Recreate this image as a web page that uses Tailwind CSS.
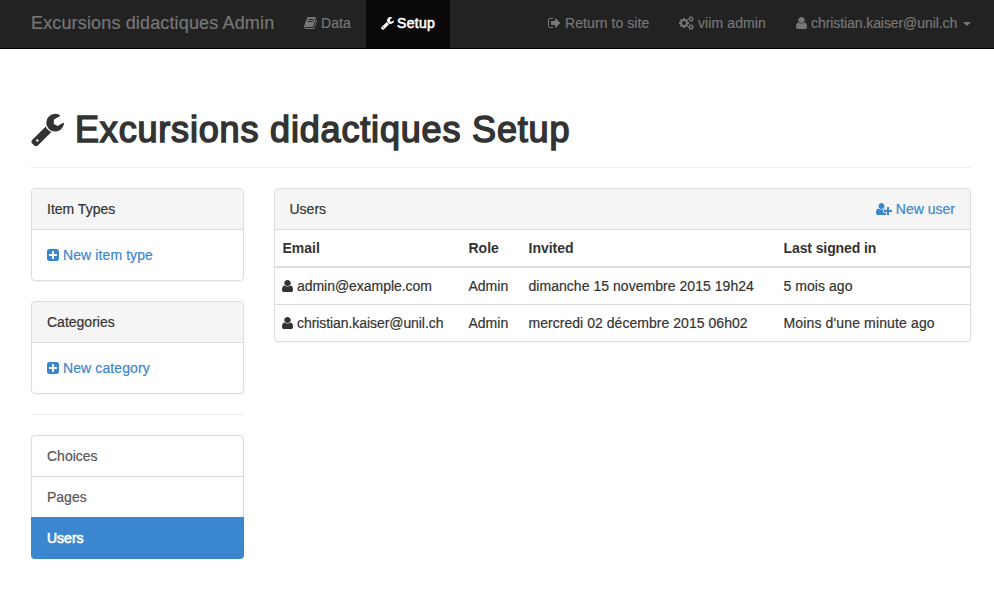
<!DOCTYPE html>
<html lang="fr">
<head>
<meta charset="utf-8">
<title>Excursions didactiques Admin</title>
<script src="https://cdn.jsdelivr.net/npm/@tailwindcss/browser@4"></script>
</head>
<body class="bg-white text-[14px] leading-[20px] text-[#333] font-['Liberation_Sans',Arial,sans-serif] whitespace-nowrap [-webkit-text-stroke:0.2px]">
<svg class="hidden">
  <symbol id="wrench" viewBox="64 0 1664 1792"><path d="M448 1472q0-26-19-45t-45-19-45 19-19 45 19 45 45 19 45-19 19-45zm644-420l-682 682q-37 37-90 37-52 0-91-37l-106-108q-38-36-38-90 0-53 38-91l681-681q39 98 114.5 173.5t173.5 114.5zm634-435q0 39-23 106-47 134-164.500 217.500t-258.500 83.500q-185 0-316.500-131.500t-131.500-316.500 131.500-316.500 316.500-131.500q58 0 121.500 16.500t107.500 46.500q16 11 16 28t-16 28l-293 169v224l193 107q5-3 79-48.500t135.500-81 70.500-35.500q15 0 23.500 10t8.500 25z"/></symbol>
  <symbol id="book" viewBox="64 0 1664 1792"><path d="M1703 478q40 57 18 129l-275 906q-19 64-76.500 107.500t-122.500 43.500h-923q-77 0-148.500-53.500t-99.500-131.500q-24-67-2-127 0-4 3-27t4-37q1-8-3-21.500t-3-19.500q2-11 8-21t16.500-23.500 16.500-23.500q23-38 45-91.500t30-91.500q3-10 .5-30t-.5-28q3-11 17-28t17-23q21-36 42-92t25-90q1-9-2.500-32t.5-28q4-13 22-30.500t22-22.500q19-26 42.500-84.500t27.500-96.500q1-8-3-25.500t-2-26.500q2-8 9-18t18-23 17-21q8-12 16.500-30.500t15-35 16-36 19.500-32 26.500-23.500 36-11.500 47.500 5.500l-1 3q38-9 51-9h761q74 0 114 56t18 130l-274 906q-36 119-71.500 153.500t-128.500 34.500h-869q-27 0-38 15-11 16-1 43 24 70 144 70h923q29 0 56-15.500t35-41.500l300-987q7-22 5-57 38 15 59 43zm-1064 2q-4 13 2 22.500t20 9.500h608q13 0 25.500-9.500t16.500-22.500l21-64q4-13-2-22.500t-20-9.500h-608q-13 0-25.500 9.500t-16.500 22.500zm-83 256q-4 13 2 22.500t20 9.500h608q13 0 25.500-9.500t16.500-22.500l21-64q4-13-2-22.500t-20-9.500h-608q-13 0-25.500 9.500t-16.500 22.500z"/></symbol>
  <symbol id="signout" viewBox="64 0 1664 1792"><path d="M704 1440q0 4 1 20t.5 26.500-3 23.500-10 19.500-20.500 6.500h-320q-119 0-203.500-84.500t-84.500-203.500v-704q0-119 84.500-203.500t203.500-84.500h320q13 0 22.500 9.500t9.500 22.500q0 4 1 20t.5 26.500-3 23.500-10 19.500-20.500 6.500h-320q-66 0-113 47t-47 113v704q0 66 47 113t113 47h312l11.500 1 11.500 3 8 5.500 7 9 2 13.500zm928-544q0 26-19 45l-544 544q-19 19-45 19t-45-19-19-45v-288h-448q-26 0-45-19t-19-45v-384q0-26 19-45t45-19h448v-288q0-26 19-45t45-19 45 19l544 544q19 19 19 45z"/></symbol>
  <symbol id="cogs" viewBox="0 0 1920 1792"><path d="M896 896q0-106-75-181t-181-75-181 75-75 181 75 181 181 75 181-75 75-181zm768 512q0-52-38-90t-90-38-90 38-38 90q0 53 37.500 90.500t90.500 37.500 90.500-37.500 37.500-90.500zm0-1024q0-52-38-90t-90-38-90 38-38 90q0 53 37.500 90.500t90.500 37.500 90.500-37.500 37.500-90.500zm-384 421v185q0 10-7 19.500t-16 10.500l-155 24q-11 35-32 76 34 48 90 115 7 11 7 20 0 12-7 19-23 30-82.500 89.500t-78.500 59.500q-11 0-21-7l-115-90q-37 19-77 31-11 108-23 155-7 24-30 24h-186q-11 0-20-7.500t-10-17.500l-23-153q-34-10-75-31l-118 89q-7 7-20 7-11 0-21-8-144-133-144-160 0-9 7-19 10-14 41-53t47-61q-23-44-35-82l-152-24q-10-1-17-9.500t-7-19.500v-185q0-10 7-19.500t16-10.500l155-24q11-35 32-76-34-48-90-115-7-11-7-20 0-12 7-20 22-30 82-89t79-59q11 0 21 7l115 90q34-18 77-32 11-108 23-154 7-24 30-24h186q11 0 20 7.500t10 17.500l23 153q34 10 75 31l118-89q8-7 20-7 11 0 21 8 144 133 144 160 0 8-7 19-12 16-42 54t-45 60q23 48 34 82l152 23q10 2 17 10.500t7 19.500zm640 533v140q0 16-149 31-12 27-30 52 51 113 51 138 0 4-4 7-122 71-124 71-8 0-46-47t-52-68q-20 2-30 2t-30-2q-14 21-52 68t-46 47q-2 0-124-71-4-3-4-7 0-25 51-138-18-25-30-52-149-15-149-31v-140q0-16 149-31 13-29 30-52-51-113-51-138 0-4 4-7 4-2 35-20t59-34 30-16q8 0 46 46.500t52 67.500q20-2 30-2t30 2q51-71 92-112l6-2q4 0 124 70 4 3 4 7 0 25-51 138 17 23 30 52 149 15 149 31zm0-1024v140q0 16-149 31-12 27-30 52 51 113 51 138 0 4-4 7-122 71-124 71-8 0-46-47t-52-68q-20 2-30 2t-30-2q-14 21-52 68t-46 47q-2 0-124-71-4-3-4-7 0-25 51-138-18-25-30-52-149-15-149-31v-140q0-16 149-31 13-29 30-52-51-113-51-138 0-4 4-7 4-2 35-20t59-34 30-16q8 0 46 46.500t52 67.500q20-2 30-2t30 2q51-71 92-112l6-2q4 0 124 70 4 3 4 7 0 25-51 138 17 23 30 52 149 15 149 31z"/></symbol>
  <symbol id="user" viewBox="256 0 1280 1792" preserveAspectRatio="none"><path d="M1536 1399q0 109-62.500 187t-150.500 78h-854q-88 0-150.500-78t-62.500-187q0-85 8.500-160.500t31.500-152 58.500-131 94-89 134.500-34.500q131 128 313 128t313-128q76 0 134.500 34.500t94 89 58.500 131 31.500 152 8.500 160.500zm-256-887q0 159-112.500 271.500t-271.500 112.500-271.500-112.500-112.500-271.500 112.500-271.500 271.500-112.500 271.500 112.500 112.500 271.500z"/></symbol>
  <symbol id="plus" viewBox="128 0 1536 1792"><path d="M1408 960v-128q0-26-19-45t-45-19h-320v-320q0-26-19-45t-45-19h-128q-26 0-45 19t-19 45v320h-320q-26 0-45 19t-19 45v128q0 26 19 45t45 19h320v320q0 26 19 45t45 19h128q26 0 45-19t19-45v-320h320q26 0 45-19t19-45zm256-544v960q0 119-84.500 203.500t-203.500 84.500h-960q-119 0-203.500-84.500t-84.500-203.500v-960q0-119 84.500-203.500t203.500-84.500h960q119 0 203.500 84.500t84.500 203.500z"/></symbol>
  <symbol id="userplus" viewBox="0 0 2048 1792"><path d="M704 896q-159 0-271.500-112.500t-112.500-271.500 112.500-271.500 271.500-112.500 271.500 112.500 112.500 271.500-112.500 271.500-271.500 112.500zm960 128h352q13 0 22.500 9.500t9.500 22.500v192q0 13-9.500 22.500t-22.500 9.500h-352v352q0 13-9.500 22.500t-22.500 9.500h-192q-13 0-22.500-9.500t-9.500-22.500v-352h-352q-13 0-22.500-9.500t-9.500-22.500v-192q0-13 9.500-22.500t22.500-9.500h352v-352q0-13 9.500-22.500t22.500-9.500h192q13 0 22.500 9.500t9.500 22.500v352zm-736 224q0 52 38 90t90 38h256v238q-68 50-171 50h-874q-121 0-194-69t-73-190q0-53 3.500-103.500t14-109 26.500-108.500 43-97.500 62-81 85.500-53.500 111.500-20q19 0 39 17 79 61 154.500 91.500t164.500 30.500 164.500-30.500 154.500-91.500q20-17 39-17 132 0 217 96h-223q-52 0-90 38t-38 90v192z"/></symbol>
</svg>

<nav class="h-[49px] bg-[#222] border-b border-black flex justify-between pl-[31px] pr-[23px] text-[#777]">
  <div class="flex">
    <a class="text-[18px] leading-[46px] w-[259px] tracking-[0.15px]">Excursions didactiques Admin</a>
    <a class="w-[76px] pl-[14px] pb-[2px] flex items-center gap-1"><svg class="w-[13px] h-[14px] fill-current"><use href="#book"/></svg><span class="tracking-[0.1px]">Data</span></a>
    <a class="w-[84px] pl-[15px] pb-[2px] flex items-center gap-[3px] bg-[#090909] text-white"><svg class="w-[13px] h-[14px] fill-current"><use href="#wrench"/></svg><span class="tracking-[0.3px] [-webkit-text-stroke:0.6px]">Setup</span></a>
  </div>
  <div class="flex pb-[2px]">
    <a class="w-[131px] flex items-center gap-1"><svg class="w-[13px] h-[14px] fill-current"><use href="#signout"/></svg><span class="tracking-[0.08px]">Return to site</span></a>
    <a class="w-[117px] flex items-center gap-1"><svg class="w-[15px] h-[14px] fill-current"><use href="#cogs"/></svg><span class="tracking-[0.1px]">viim admin</span></a>
    <a class="w-[175px] flex items-center"><svg class="w-[11px] h-[14px] fill-current mr-1"><use href="#user"/></svg><span class="tracking-[-0.08px]">christian.kaiser@unil.ch</span><i class="ml-auto mt-[2px] border-x-4 border-x-transparent border-t-4 border-t-[#777]"></i></a>
  </div>
</nav>

<main class="pl-[31px] pr-[23px] pt-[60px]">
  <h1 class="h-[59px] border-b border-[#eee] flex items-start gap-[11px] text-[36px] leading-[40px]"><svg class="w-[33px] h-[36px] mt-[2px] fill-current"><use href="#wrench"/></svg><span class="pt-[1px] tracking-[0.82px] [-webkit-text-stroke:1.5px]">Excursions didactiques Setup</span></h1>
  <div class="flex gap-[30px] items-start mt-[20px]">
    <aside class="w-[213px]">
      <section class="h-[93px] border border-[#ddd] rounded shadow-xs">
        <h3 class="h-[41px] pl-[15px] py-[10px] bg-[#f5f5f5] border-b border-[#ddd] rounded-t-[3px]">Item Types</h3>
        <a class="mt-[15px] pl-[15px] flex items-center gap-1 text-[#3a87cf]"><svg class="w-[12px] h-[14px] fill-current"><use href="#plus"/></svg><span class="tracking-[0.1px]">New item type</span></a>
      </section>
      <section class="mt-[20px] h-[93px] border border-[#ddd] rounded shadow-xs">
        <h3 class="h-[41px] pl-[15px] py-[10px] bg-[#f5f5f5] border-b border-[#ddd] rounded-t-[3px]">Categories</h3>
        <a class="mt-[15px] pl-[15px] flex items-center gap-1 text-[#3a87cf]"><svg class="w-[12px] h-[14px] fill-current"><use href="#plus"/></svg><span class="tracking-[0.1px]">New category</span></a>
      </section>
      <hr class="my-[20px] border-[#eee]">
      <div class="text-[#555]">
        <a class="block h-[41px] pl-[15px] py-[10px] border border-b-0 border-[#ddd] rounded-t">Choices</a>
        <a class="block h-[41px] pl-[15px] py-[10px] border border-b-0 border-[#ddd]">Pages</a>
        <a class="block h-[42px] pl-[16px] py-[11px] bg-[#3a87cf] text-white rounded-b"><span class="[-webkit-text-stroke:0.6px]">Users</span></a>
      </div>
    </aside>
    <section class="w-[697px] h-[154px] border border-[#ddd] rounded shadow-xs">
      <header class="h-[41px] pl-[14.5px] pr-[15px] bg-[#f5f5f5] border-b border-[#ddd] rounded-t-[3px] flex items-center justify-between"><h3>Users</h3><a class="flex items-center gap-1 text-[#3a87cf]"><svg class="w-[16px] h-[14px] fill-current"><use href="#userplus"/></svg><span>New user</span></a></header>
      <table class="w-full table-fixed text-left">
        <colgroup><col class="w-[186px]"><col class="w-[60px]"><col class="w-[255px]"><col></colgroup>
        <tr class="h-[37px] border-b-2 border-[#ddd] [-webkit-text-stroke:0px]"><th class="pl-[7.5px]">Email</th><th class="pl-[7.5px]">Role</th><th class="pl-[7.5px]">Invited</th><th class="pl-[7.5px] tracking-[-0.1px]">Last signed in</th></tr>
        <tr class="h-[37px] border-b border-[#ddd]"><td class="pl-[7px]"><div class="flex items-center gap-1"><svg class="w-[11px] h-[14px] fill-current"><use href="#user"/></svg><span class="tracking-[-0.04px]">admin@example.com</span></div></td><td class="pl-[7.5px]">Admin</td><td class="pl-[7.5px] tracking-[0.04px]">dimanche 15 novembre 2015 19h24</td><td class="pl-[7.5px] tracking-[0.05px]">5 mois ago</td></tr>
        <tr class="h-[37px]"><td class="pl-[7px]"><div class="flex items-center gap-1"><svg class="w-[11px] h-[14px] fill-current"><use href="#user"/></svg><span class="tracking-[-0.07px]">christian.kaiser@unil.ch</span></div></td><td class="pl-[7.5px]">Admin</td><td class="pl-[7.5px] tracking-[0.04px]">mercredi 02 décembre 2015 06h02</td><td class="pl-[7.5px] tracking-[0.14px]">Moins d'une minute ago</td></tr>
      </table>
    </section>
  </div>
</main>
</body>
</html>
